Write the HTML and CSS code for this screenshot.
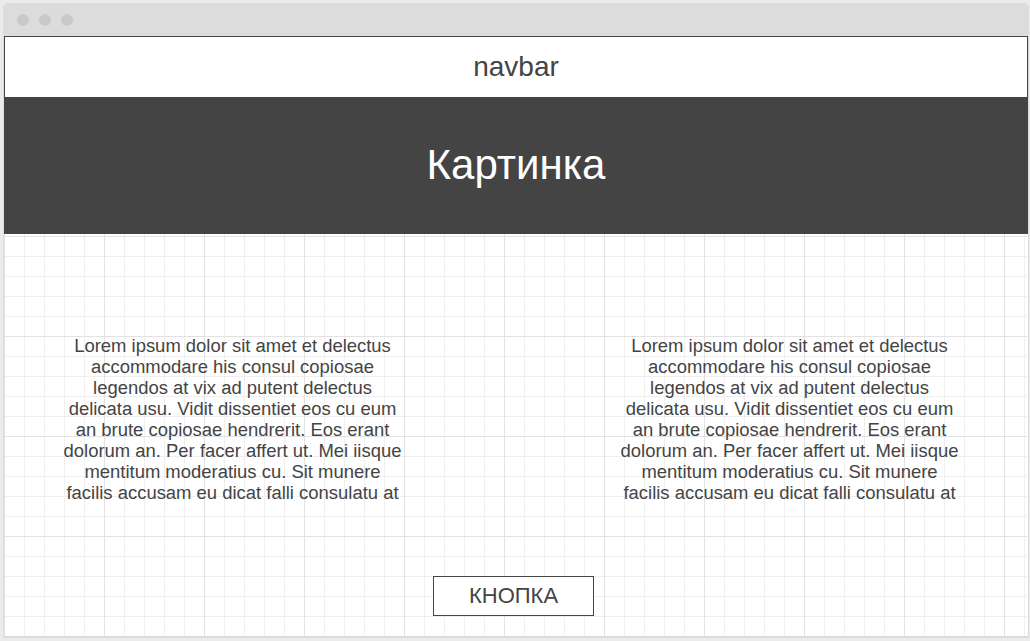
FILE: index.html
```html
<!DOCTYPE html>
<html lang="ru">
<head>
<meta charset="utf-8">
<title>Mockup</title>
<link rel="stylesheet" href="styles.css">
</head>
<body>
<div class="window">
  <div class="titlebar">
    <span class="dot"></span><span class="dot"></span><span class="dot"></span>
  </div>
  <div class="navbar">navbar</div>
  <div class="hero">Картинка</div>
  <div class="content">
    <div class="columns">
      <p class="col">Lorem ipsum dolor sit amet et delectus accommodare his consul copiosae legendos at vix ad putent delectus delicata usu. Vidit dissentiet eos cu eum an brute copiosae hendrerit. Eos erant dolorum an. Per facer affert ut. Mei iisque mentitum moderatius cu. Sit munere facilis accusam eu dicat falli consulatu at</p>
      <p class="col">Lorem ipsum dolor sit amet et delectus accommodare his consul copiosae legendos at vix ad putent delectus delicata usu. Vidit dissentiet eos cu eum an brute copiosae hendrerit. Eos erant dolorum an. Per facer affert ut. Mei iisque mentitum moderatius cu. Sit munere facilis accusam eu dicat falli consulatu at</p>
    </div>
    <div class="actions">
      <button class="btn" type="button">КНОПКА</button>
    </div>
  </div>
</div>
</body>
</html>
```
FILE: styles.css
```css
html, body {
  margin: 0;
  padding: 0;
}
body {
  background: #ebebeb;
  font-family: "Liberation Sans", Arial, sans-serif;
  color: #444;
}
.window {
  margin: 3px 0 0 3px;
  width: 1024px;
  padding: 0 1px 2px 1px;
  background: #dcdcdc;
  border-radius: 5px 5px 0 0;
}
.titlebar {
  height: 33px;
  display: flex;
  align-items: center;
  gap: 10px;
  padding-left: 13px;
}
.dot {
  width: 12px;
  height: 12px;
  border-radius: 50%;
  background: #c9c9c9;
}
.navbar {
  height: 60px;
  border: 1px solid #444;
  border-bottom: 0;
  background: #fff;
  display: flex;
  align-items: center;
  justify-content: center;
  font-size: 28px;
  color: #444;
}
.hero {
  height: 137px;
  background: #444;
  color: #fff;
  display: flex;
  align-items: center;
  justify-content: center;
  font-size: 42px;
  padding-bottom: 2px;
  box-sizing: border-box;
}
.content {
  height: 402px;
  background-color: #fff;
  background-image:
    linear-gradient(to right, #e2e2e2 1px, transparent 1px),
    linear-gradient(to bottom, #e2e2e2 1px, transparent 1px),
    linear-gradient(to right, #efefef 1px, transparent 1px),
    linear-gradient(to bottom, #efefef 1px, transparent 1px);
  background-size: 100px 100px, 100px 100px, 20px 20px, 20px 20px;
  background-position: 0 2px, 0 2px, 0 2px, 0 2px;
  display: flex;
  flex-direction: column;
  box-sizing: border-box;
  padding-top: 101px;
}
.columns {
  display: flex;
  padding-left: 58px;
  gap: 216px;
}
.col {
  width: 341px;
  margin: 0;
  font-size: 18.45px;
  line-height: 21px;
  text-align: center;
  color: #444;
}
.actions {
  display: flex;
  justify-content: center;
  padding-right: 5px;
  margin-top: 73px;
}
.btn {
  width: 161px;
  height: 40px;
  border: 1px solid #444;
  background: #fff;
  font-family: "Liberation Sans", Arial, sans-serif;
  font-size: 22px;
  color: #444;
  padding: 0;
  cursor: pointer;
}
```
